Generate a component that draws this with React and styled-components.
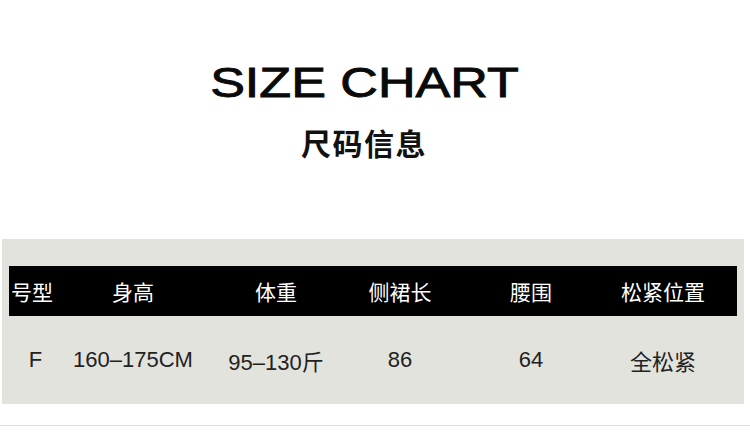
import React from "react";
import styled, { createGlobalStyle } from "styled-components";

const GlobalStyle = createGlobalStyle`
  html, body {
    margin: 0;
    padding: 0;
    background: #ffffff;
  }
`;

const Page = styled.div`
  width: 750px;
  display: flex;
  flex-direction: column;
  align-items: stretch;
`;

const TitleBlock = styled.div`
  display: flex;
  flex-direction: column;
  align-items: center;
  padding: 62px 22px 0 0;
`;

const Title = styled.h1`
  margin: 0;
  font-family: "Liberation Sans", Arial, sans-serif;
  font-weight: 400;
  font-size: 42px;
  line-height: 42px;
  color: #0a0a0a;
  -webkit-text-stroke: 0.9px #0a0a0a;
  transform: scaleX(1.24);
  white-space: nowrap;
`;

const SubTitle = styled.h2`
  margin: 23px 0 0 0;
  font-family: "Noto Sans CJK SC", sans-serif;
  font-weight: 700;
  font-size: 30px;
  line-height: 30px;
  letter-spacing: 1.5px;
  color: #111111;
`;

const Panel = styled.section`
  margin: 82px 6px 0 2px;
  height: 165px;
  box-sizing: border-box;
  padding: 27px 7px 0 7px;
  background: #e3e3de;
`;

const cols = "46px 156px 130px 118px 144px 120px 1fr";

const HeaderBar = styled.div`
  display: grid;
  grid-template-columns: ${cols};
  align-items: center;
  height: 50px;
  background: #000000;
`;

const DataRow = styled.div`
  display: grid;
  grid-template-columns: ${cols};
  align-items: center;
  height: 87px;
`;

const Cell = styled.div`
  text-align: center;
  white-space: nowrap;
  font-family: "Liberation Sans", Arial, "Noto Sans CJK SC", sans-serif;
  font-size: ${(p) => (p.$head ? "21px" : "22px")};
  color: ${(p) => (p.$head ? "#ffffff" : "#222222")};
  padding-left: ${(p) => p.$shift || 0}px;
`;

const Rule = styled.hr`
  margin: 21px 0 0 0;
  border: none;
  height: 1px;
  background: #dddddd;
`;

const headers = ["号型", "身高", "体重", "侧裙长", "腰围", "松紧位置"];
const values = ["F", "160–175CM", "95–130斤", "86", "64", "全松紧"];

export default function App() {
  return (
    <>
      <GlobalStyle />
      <Page>
        <TitleBlock>
          <Title>SIZE CHART</Title>
          <SubTitle>尺码信息</SubTitle>
        </TitleBlock>
        <Panel>
          <HeaderBar>
            {headers.map((h) => (
              <Cell key={h} $head>
                {h}
              </Cell>
            ))}
          </HeaderBar>
          <DataRow>
            {values.map((v, i) => (
              <Cell key={v} $shift={i === 0 ? 7 : 0}>
                {v}
              </Cell>
            ))}
          </DataRow>
        </Panel>
        <Rule />
      </Page>
    </>
  );
}
